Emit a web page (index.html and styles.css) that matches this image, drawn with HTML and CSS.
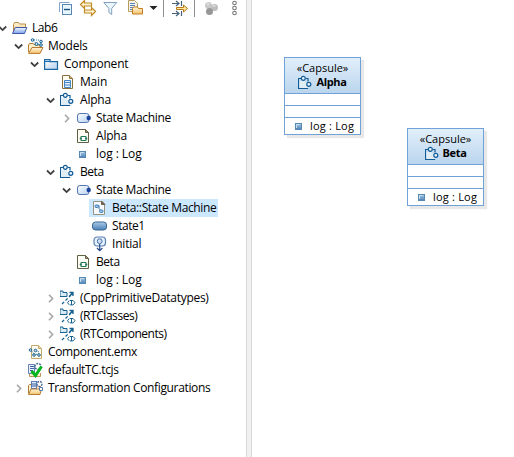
FILE: index.html
```
<!DOCTYPE html>
<html lang="en">
<head>
<meta charset="utf-8">
<title>Lab6</title>
<link rel="stylesheet" href="styles.css">
</head>
<body>
<svg class="defs" aria-hidden="true">
<defs>
<linearGradient id="gold" x1="0" y1="0" x2="0" y2="1"><stop offset="0" stop-color="#fff6dc"/><stop offset="1" stop-color="#f5c269"/></linearGradient>
<linearGradient id="blue" x1="0" y1="0" x2="0" y2="1"><stop offset="0" stop-color="#f5faff"/><stop offset="1" stop-color="#7aa0ec"/></linearGradient>
<linearGradient id="pill" x1="0" y1="0" x2="0" y2="1"><stop offset="0" stop-color="#a9cbe8"/><stop offset="1" stop-color="#4d80b5"/></linearGradient>
<linearGradient id="pale" x1="0" y1="0" x2="1" y2="1"><stop offset="0" stop-color="#fff"/><stop offset="1" stop-color="#b5d0ee"/></linearGradient>
</defs>
<symbol id="down" viewBox="0 0 16 16"><path d="M3 6.500l3.600 3.600 3.600-3.600" fill="none" stroke="#404040" stroke-width="1.800"/></symbol>
<symbol id="right" viewBox="0 0 16 16"><path d="M5 4.800l3.600 3.700L5 12.200" fill="none" stroke="#a6a6a6" stroke-width="1.600"/></symbol>
<symbol id="project" viewBox="0 0 16 16"><path d="M1.500 13V4.500l1-2h4l1 1.500h6V8" fill="url(#gold)" stroke="#b98b4d"/><path d="M.5 13.500L3.300 7.500h11.500l-2.300 6z" fill="url(#blue)" stroke="#4257a7"/></symbol>
<symbol id="models" viewBox="0 0 16 16"><path d="M.5 14V7l1-1.500h3.500L7 7h5v3" fill="#fff0cd" stroke="#ba7a2d"/><path d="M.6 15.400L4 9.500h11l-3 5.900z" fill="url(#gold)" stroke="#ba7a2d"/><path d="M5 2.500L8.500 6M6 2h6M8.500 7l4-1" stroke="#2b77a6" stroke-dasharray="1 1"/><g fill="#c5e0ef" stroke="#1c6795"><circle cx="4.500" cy="2" r="1.300"/><circle cx="8.500" cy="6" r="1.500"/><circle cx="13" cy="3.500" r="1.300"/><circle cx="13" cy="7" r="1.300"/></g></symbol>
<symbol id="folder" viewBox="0 0 16 16"><path d="M.6 13.400V3.600h5.500v2h7.400v7.800z" fill="url(#pale)" stroke="#1968a5" stroke-width="1.200"/><path d="M1 5.500h6" stroke="#1968a5"/></symbol>
<symbol id="document" viewBox="0 0 16 16"><path d="M2.500 1.500h7l3 3v10h-10z" fill="#fffdf0" stroke="#88703f"/><path d="M9.500 1.500v3h3" fill="#d3b975" stroke="#88703f"/><path d="M4.500 6.500h6v7h-6zM5 8.500h5M5 11h5" fill="#e5f1ff" stroke="#4385c5"/></symbol>
<symbol id="capsule" viewBox="0 0 16 16"><path d="M3.500 3.500h-3v10h9v-2M8 3.500h2v3" fill="none" stroke="#125b94" stroke-width="1.200"/><path d="M1.500 6h5l4 6v1h-9z" fill="#e0edf5"/><circle cx="5.300" cy="3.300" r="2" fill="#e8f5ff" stroke="#125b94" stroke-width="1.200"/><circle cx="10.800" cy="9.300" r="2" fill="#e8f5ff" stroke="#125b94" stroke-width="1.200"/></symbol>
<symbol id="machine" viewBox="0 0 16 16"><rect x="1.500" y="3.500" width="11.500" height="9" rx="2.500" fill="url(#pale)" stroke="#5275b0"/><circle cx="12.700" cy="8" r="2.200" fill="#17439a"/></symbol>
<symbol id="source" viewBox="0 0 16 16"><path d="M1.500 1.500h8l3 3v10h-11z" fill="#fffef5" stroke="#626044"/><path d="M9.500 1.500v3h3z" fill="#aaa075" stroke="#626044"/><rect x="5" y="8.500" width="5" height="4" rx=".5" fill="#fff" stroke="#237957" stroke-width="1.200"/><path d="M3.700 10.500h2M9.300 10.500h2" stroke="#237957" stroke-width="1.700"/></symbol>
<symbol id="attribute" viewBox="0 0 16 16"><rect x="3.500" y="5.500" width="6" height="6" fill="url(#pill)" stroke="#5689b2"/><path d="M4.500 10V6.500h3" fill="none" stroke="#cae1f2"/></symbol>
<symbol id="diagram" viewBox="0 0 16 16"><path d="M1.500 1.500h8l3 3v10h-11z" fill="#f5f9ff" stroke="#95927e"/><path d="M9.500 1v3.500H13z" fill="#70624b" stroke="#70624b"/><path d="M5 5.500h2v3l3 3" fill="none" stroke="#376c9d"/><rect x="3" y="5" width="3.500" height="2.500" rx="1" fill="#9bc6eb" stroke="#4580b3"/><rect x="7.500" y="10" width="3.500" height="2.500" rx="1" fill="#9bc6eb" stroke="#4580b3"/></symbol>
<symbol id="state" viewBox="0 0 16 16"><rect x=".5" y="4" width="14" height="8" rx="3" fill="url(#pill)" stroke="#3a6791"/></symbol>
<symbol id="initial" viewBox="0 0 16 16"><rect x="2" y="1" width="11.500" height="9" rx="3" fill="#e7f1ff" stroke="#5b82b5" stroke-width="1.200"/><circle cx="7.700" cy="5.200" r="2.400" fill="#cfe0f5" stroke="#4972a7"/><path d="M7.700 8v6.500M5 12l2.700 2.700 2.700-2.700" fill="none" stroke="#294b8b" stroke-width="1.200"/></symbol>
<symbol id="import" viewBox="0 0 16 16"><path d="M-.5 .5h3v1.500h4v4h-7z" fill="#d7eaf6" stroke="#17618f" transform="translate(.5 .5)"/><path d="M2 14l9-9" stroke="#17618f" stroke-width="1.300" stroke-dasharray="3 2"/><path d="M9.500 2.500H13V6M12.500 3L9.500 6" fill="none" stroke="#17618f" stroke-width="1.300"/><path d="M9.300 10.500L7.500 12.700l1.800 2.200M13.200 10.500l1.800 2.200-1.800 2.200M10 10.500h3M10 14.900h3M11.500 10.500v4.500" fill="none" stroke="#17618f"/></symbol>
<symbol id="emx" viewBox="0 0 16 16"><path d="M3.500 1.500h7l3 3v10h-10z" fill="#fffdf2" stroke="#c2aa6b"/><path d="M10.500 1.500v3h3" fill="#e6d49b" stroke="#c2aa6b"/><path d="M3 6.500l4 4 4-.5M7 6l4 2" stroke="#377ba9" fill="none" stroke-dasharray="2 1"/><g fill="#c8e2f3" stroke="#20638e"><circle cx="2.500" cy="6" r="1.300"/><circle cx="7.500" cy="6.500" r="1.300"/><circle cx="6" cy="11" r="1.300"/><circle cx="11" cy="11" r="1.300"/></g></symbol>
<symbol id="config" viewBox="0 0 16 16"><path d="M.5 2.500h6v9h-6z" fill="#e9efff" stroke="#6482b5"/><path d="M2 4.500h4M2 6.500h4M2 8.500h3" stroke="#4167a8"/><circle cx="10" cy="4.500" r="3" fill="#fff" stroke="#50739c" stroke-width="1.500" stroke-dasharray="2 1"/><path d="M1.500 12v2.500h11V11" fill="#fff0cd" stroke="#b9975a"/><path d="M3.500 9l4 4.500L13.500 4.500" fill="none" stroke="#00b51e" stroke-width="3"/></symbol>
<symbol id="configs" viewBox="0 0 16 16"><path d="M.5 13.500V5.500l1-1h3l1 1.500h7v3" fill="#fff0cd" stroke="#b57b32"/><rect x="3.500" y="1.500" width="5" height="7" fill="#e4edff" stroke="#587eb5"/><path d="M4 4h4M4 6h4" stroke="#345b99"/><circle cx="11.500" cy="4" r="2.500" fill="#fff" stroke="#4b6c98" stroke-width="1.400" stroke-dasharray="2 1"/><path d="M.6 14.500L3 9h10.500l-1.500 5.500z" fill="url(#gold)" stroke="#b57b32"/><path d="M11.500 7.500h3v3h-3z" fill="#fff" stroke="#527db0"/></symbol>
</svg>
<div class="workbench">
<aside class="explorer">
<svg class="toolbar" viewBox="0 0 246 19">
<path d="M59.500 12V2.500h10" fill="none" stroke="#83a6c9"/><rect x="62.500" y="4.500" width="9" height="10" fill="#e9f6ff" stroke="#5987b3"/><path d="M64 9.500h6" stroke="#165180" stroke-width="1.400"/>
<path d="M80.500 4.500l4-4v2.500h7v3h-7v2.500zM95.500 11.500l-4-4V10h-7v3h7v2.500z" fill="#fff2ce" stroke="#c28a24" stroke-width="1.200"/>
<path d="M103.800 2.500h12.900l-5 6v6l-2.800-2V8.500z" fill="#eaf5fc" stroke="#819fbb"/>
<path d="M128.500 .5h6l3 3v8h-9z" fill="#f7f5e9" stroke="#b79a5e"/><path d="M130 3.500h5M130 5.500h5M130 7.500h3M130 9.500h3" stroke="#597fb4"/><path d="M132.500 8.500l1-1.500h4l1 1.500h4v5.500h-10z" fill="url(#gold)" stroke="#c47c23"/>
<path d="M149.500 6h8l-4 4z" fill="#222"/><path d="M163.500 0v17M194.500 0v17" stroke="#909090"/>
<path d="M172 3.500h7M176 1l3 2.500-3 2.500M172 13.500h7M176 11l3 2.500-3 2.500M181.500 1v5M181.500 11v5" fill="none" stroke="#46627b" stroke-width="1.200"/><path d="M176.500 7.500h7V5l4 3.500-4 3.500V9.500h-7z" fill="#ffe7a0" stroke="#b6781a"/>
<circle cx="208.500" cy="5.500" r="3.500" fill="#c9c9c9"/><circle cx="214.500" cy="7.500" r="3.500" fill="#bebebe"/><circle cx="209.500" cy="11.500" r="3.500" fill="#979797"/><path d="M206.500 4h3M212.500 6h3" stroke="#eee"/>
<g fill="#fff" stroke="#777" stroke-width="1.100"><circle cx="234.500" cy="3" r="1.800"/><circle cx="234.500" cy="8" r="1.800"/><circle cx="234.500" cy="13" r="1.800"/></g>
</svg>
<div class="tree">
<div class="row l0"><svg><use href="#down"/></svg><svg><use href="#project"/></svg><span class="tight">Lab6</span></div>
<div class="row l1"><svg><use href="#down"/></svg><svg><use href="#models"/></svg><span>Models</span></div>
<div class="row l2"><svg><use href="#down"/></svg><svg><use href="#folder"/></svg><span>Component</span></div>
<div class="row l3"><svg></svg><svg><use href="#document"/></svg><span>Main</span></div>
<div class="row l3"><svg><use href="#down"/></svg><svg><use href="#capsule"/></svg><span>Alpha</span></div>
<div class="row l4"><svg><use href="#right"/></svg><svg><use href="#machine"/></svg><span class="snug">State Machine</span></div>
<div class="row l4"><svg></svg><svg><use href="#source"/></svg><span>Alpha</span></div>
<div class="row l4"><svg></svg><svg><use href="#attribute"/></svg><span class="loose">log : Log</span></div>
<div class="row l3"><svg><use href="#down"/></svg><svg><use href="#capsule"/></svg><span class="tight">Beta</span></div>
<div class="row l4"><svg><use href="#down"/></svg><svg><use href="#machine"/></svg><span class="snug">State Machine</span></div>
<div class="row l5 selected"><svg><use href="#diagram"/></svg><span class="snug">Beta::State Machine</span></div>
<div class="row l5"><svg></svg><svg><use href="#state"/></svg><span class="tight">State1</span></div>
<div class="row l5"><svg></svg><svg><use href="#initial"/></svg><span>Initial</span></div>
<div class="row l4"><svg></svg><svg><use href="#source"/></svg><span class="tight">Beta</span></div>
<div class="row l4"><svg></svg><svg><use href="#attribute"/></svg><span class="loose">log : Log</span></div>
<div class="row l3"><svg><use href="#right"/></svg><svg><use href="#import"/></svg><span class="medium">(CppPrimitiveDatatypes)</span></div>
<div class="row l3"><svg><use href="#right"/></svg><svg><use href="#import"/></svg><span class="tight">(RTClasses)</span></div>
<div class="row l3"><svg><use href="#right"/></svg><svg><use href="#import"/></svg><span class="tight">(RTComponents)</span></div>
<div class="row l1"><svg></svg><svg><use href="#emx"/></svg><span class="snug">Component.emx</span></div>
<div class="row l1"><svg></svg><svg><use href="#config"/></svg><span class="snug">defaultTC.tcjs</span></div>
<div class="row l1"><svg><use href="#right"/></svg><svg><use href="#configs"/></svg><span class="snug">Transformation Configurations</span></div>
</div>
</aside>
<div class="sash"></div>
<main class="canvas">
<section class="node alpha"><header><div>«Capsule»</div><h2><svg><use href="#capsule"/></svg><span>Alpha</span></h2></header><div class="slot"></div><div class="slot"></div><div class="member"><svg><use href="#attribute"/></svg><span>log : Log</span></div></section>
<section class="node beta"><header><div>«Capsule»</div><h2><svg><use href="#capsule"/></svg><span>Beta</span></h2></header><div class="slot"></div><div class="slot"></div><div class="member"><svg><use href="#attribute"/></svg><span>log : Log</span></div></section>
</main>
</div>
</body>
</html>
```
FILE: styles.css
```
* { box-sizing: border-box; }
body { margin: 0; background: #fff; color: #000; font: 12px/18px "Open Sans", "Noto Sans", sans-serif; overflow: hidden; }
.defs { position: absolute; width: 0; height: 0; }
.workbench { display: flex; height: 457px; }
.explorer { width: 246px; overflow: hidden; }
.toolbar { display: block; width: 246px; height: 19px; }
.row { display: flex; align-items: center; height: 18px; white-space: nowrap; letter-spacing: -0.2px; }
.row svg { flex: none; width: 16px; height: 16px; }
.row span { margin-left: 4px; }
.loose { letter-spacing: -0.05px; }
.medium { letter-spacing: -0.28px; }
.snug { letter-spacing: -0.35px; }
.tight { letter-spacing: -0.45px; }
.l0 { margin-left: -4px; }
.l1 { margin-left: 12px; }
.l2 { margin-left: 28px; }
.l3 { margin-left: 44px; }
.l4 { margin-left: 60px; }
.l5 { margin-left: 76px; }
.selected { width: 129px; margin-left: 89px; padding-left: 3px; background: #cce8ff; }
.sash { width: 6px; background: #f0f0f0; border: solid #d9d9d9; border-width: 0 1px; }
.canvas { position: relative; flex: 1; }
.node { position: absolute; width: 77px; height: 78px; border: 1px solid #70a2d8; background: #fff; box-shadow: 3px 3px 1px #e8e8e8; font-size: 11px; line-height: 13px; white-space: nowrap; }
.alpha { left: 32px; top: 57px; }
.beta { left: 155px; top: 128px; }
.node header { height: 35px; padding-top: 3px; text-align: center; background: linear-gradient(#e2effb, #bad5ed); }
.node h2 { display: flex; justify-content: center; align-items: flex-start; gap: 2px; margin: 0; padding-top: 1px; font-size: 11px; line-height: 13px; letter-spacing: -0.35px; }
.node h2 svg { width: 16px; height: 16px; }
.slot { height: 12px; border-top: 1px solid #70a2d8; }
.member { display: flex; align-items: flex-start; height: 17px; border-top: 1px solid #70a2d8; padding-left: 7px; }
.member svg { width: 16px; height: 16px; }
.member span { margin: 1px 0 0 2px; letter-spacing: 0.2px; }
```
